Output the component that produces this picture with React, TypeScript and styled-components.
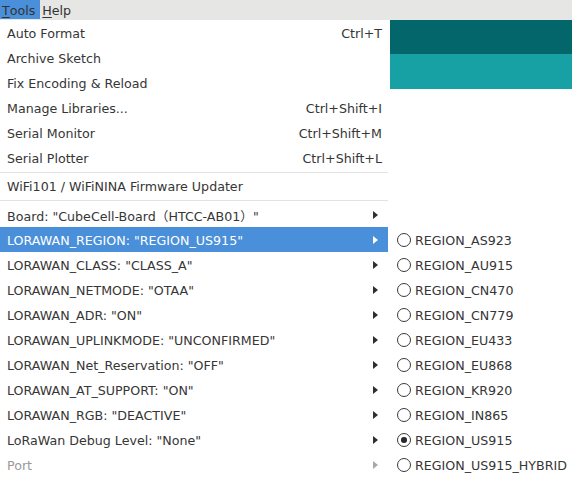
import * as React from "react";
import styled, { createGlobalStyle, css } from "styled-components";

const GlobalStyle = createGlobalStyle`
    html, body {
        margin: 0;
        padding: 0;
        background: #ffffff;
        overflow: hidden;
    }
    body {
        font-family: "DejaVu Sans", "Liberation Sans", "Noto Sans CJK SC", sans-serif;
        font-size: 12.65px;
        color: #3a3a3a;
    }
`;

const Window = styled.div`
    position: relative;
    width: 572px;
    height: 477px;
    overflow: hidden;
    background: #ffffff;
`;

const MenuBar = styled.div`
    display: flex;
    height: 20px;
    background: #e6e6e4;
`;

const MenuBarItem = styled.div<{ open?: boolean }>`
    display: flex;
    align-items: center;
    height: 19px;
    padding: 1px 5px 0 2px;
    box-sizing: border-box;
    color: #333333;
    ${({ open }) => open && css`background: #4a8fd9;`}
`;

const Mnemonic = styled.span`
    text-decoration: underline;
    text-underline-offset: 2px;
`;

const HeaderBand = styled.div<{ tone: "dark" | "light" }>`
    height: ${({ tone }) => (tone === "dark" ? 34 : 35)}px;
    background: ${({ tone }) => (tone === "dark" ? "#02666a" : "#17a1a5")};
`;

const Dropdown = styled.div`
    position: absolute;
    top: 20px;
    left: 0;
    width: 388px;
    padding-right: 2px;
    background: #ffffff;
    display: flex;
    flex-direction: column;
`;

const Item = styled.div<{ active?: boolean; disabled?: boolean }>`
    display: flex;
    align-items: center;
    box-sizing: border-box;
    height: 25px;
    padding: 1px 10px 0 7px;
    color: ${({ disabled }) => (disabled ? "#9a9a9a" : "#363636")};
    white-space: nowrap;
    ${({ active }) =>
        active &&
        css`
            background: #4a8fd9;
            color: #ffffff;
        `}
`;

const Label = styled.span`
    flex: 1;
`;

const Wide = styled.span`
    font-family: "Noto Sans CJK SC", sans-serif;
`;

const Shortcut = styled.span`
    margin-right: -4px;
`;

const Arrow = styled.span<{ active?: boolean; disabled?: boolean }>`
    width: 0;
    height: 0;
    border-top: 4px solid transparent;
    border-bottom: 4px solid transparent;
    border-left: 5px solid
        ${({ active, disabled }) => (active ? "#ffffff" : disabled ? "#a8a8a8" : "#2e2e2e")};
`;

const Separator = styled.div<{ gapBelow: number }>`
    height: 1px;
    margin: 2px 0 ${({ gapBelow }) => gapBelow}px;
    background: #e2e2e2;
`;

const Submenu = styled.div`
    position: absolute;
    top: 227px;
    left: 390px;
    right: 0;
    background: #ffffff;
    display: flex;
    flex-direction: column;
`;

const RadioItem = styled.div`
    display: flex;
    align-items: center;
    box-sizing: border-box;
    gap: 4px;
    height: 25px;
    padding: 1px 0 0 7px;
    color: #363636;
    white-space: nowrap;
`;

const Radio = styled.span<{ checked?: boolean }>`
    position: relative;
    box-sizing: border-box;
    width: 14px;
    height: 14px;
    border: 1.3px solid #3a3a3a;
    border-radius: 50%;
    ${({ checked }) =>
        checked &&
        css`
            &::after {
                content: "";
                position: absolute;
                top: 3px;
                left: 3px;
                width: 5.5px;
                height: 5.5px;
                border-radius: 50%;
                background: #2a2a2a;
            }
        `}
`;

type Entry =
    | { kind: "item"; label: React.ReactNode; shortcut?: string; sub?: boolean; active?: boolean; disabled?: boolean }
    | { kind: "sep"; gapBelow: number };

const entries: Entry[] = [
    { kind: "item", label: "Auto Format", shortcut: "Ctrl+T" },
    { kind: "item", label: "Archive Sketch" },
    { kind: "item", label: "Fix Encoding & Reload" },
    { kind: "item", label: "Manage Libraries...", shortcut: "Ctrl+Shift+I" },
    { kind: "item", label: "Serial Monitor", shortcut: "Ctrl+Shift+M" },
    { kind: "item", label: "Serial Plotter", shortcut: "Ctrl+Shift+L" },
    { kind: "sep", gapBelow: 0 },
    { kind: "item", label: "WiFi101 / WiFiNINA Firmware Updater" },
    { kind: "sep", gapBelow: 1 },
    {
        kind: "item",
        label: (
            <>
                Board: "CubeCell-Board<Wide>（</Wide>HTCC-AB01<Wide>）</Wide>"
            </>
        ),
        sub: true,
    },
    { kind: "item", label: "LORAWAN_REGION: \"REGION_US915\"", sub: true, active: true },
    { kind: "item", label: "LORAWAN_CLASS: \"CLASS_A\"", sub: true },
    { kind: "item", label: "LORAWAN_NETMODE: \"OTAA\"", sub: true },
    { kind: "item", label: "LORAWAN_ADR: \"ON\"", sub: true },
    { kind: "item", label: "LORAWAN_UPLINKMODE: \"UNCONFIRMED\"", sub: true },
    { kind: "item", label: "LORAWAN_Net_Reservation: \"OFF\"", sub: true },
    { kind: "item", label: "LORAWAN_AT_SUPPORT: \"ON\"", sub: true },
    { kind: "item", label: "LORAWAN_RGB: \"DEACTIVE\"", sub: true },
    { kind: "item", label: "LoRaWan Debug Level: \"None\"", sub: true },
    { kind: "item", label: "Port", sub: true, disabled: true },
];

const regions = [
    "REGION_AS923",
    "REGION_AU915",
    "REGION_CN470",
    "REGION_CN779",
    "REGION_EU433",
    "REGION_EU868",
    "REGION_KR920",
    "REGION_IN865",
    "REGION_US915",
    "REGION_US915_HYBRID",
];

export default function App() {
    return (
        <Window>
            <GlobalStyle />
            <MenuBar>
                <MenuBarItem open>
                    <Mnemonic>T</Mnemonic>ools
                </MenuBarItem>
                <MenuBarItem>
                    <Mnemonic>H</Mnemonic>elp
                </MenuBarItem>
            </MenuBar>
            <HeaderBand tone="dark" />
            <HeaderBand tone="light" />

            <Dropdown>
                {entries.map((e, i) =>
                    e.kind === "sep" ? (
                        <Separator key={i} gapBelow={e.gapBelow} />
                    ) : (
                        <Item key={i} active={e.active} disabled={e.disabled}>
                            <Label>{e.label}</Label>
                            {e.shortcut && <Shortcut>{e.shortcut}</Shortcut>}
                            {e.sub && <Arrow active={e.active} disabled={e.disabled} />}
                        </Item>
                    )
                )}
            </Dropdown>

            <Submenu>
                {regions.map((r) => (
                    <RadioItem key={r}>
                        <Radio checked={r === "REGION_US915"} />
                        {r}
                    </RadioItem>
                ))}
            </Submenu>
        </Window>
    );
}
